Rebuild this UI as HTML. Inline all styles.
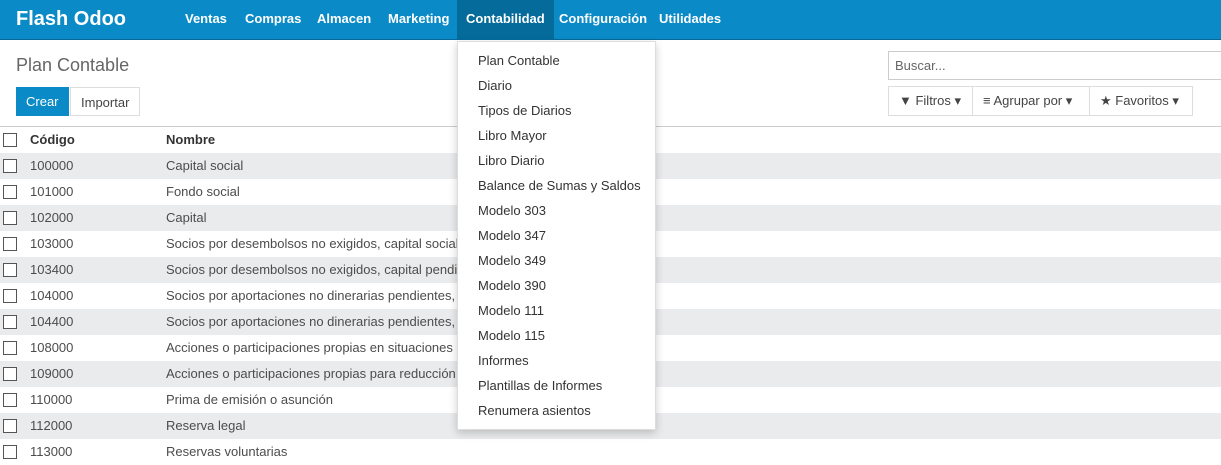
<!DOCTYPE html>
<html><head><meta charset="utf-8"><style>
*{box-sizing:border-box;margin:0;padding:0}
body{width:1221px;height:461px;overflow:hidden;background:#fff;font-family:"Liberation Sans",sans-serif;color:#4c4c4c;font-size:13px;position:relative}
.nav{position:absolute;left:0;top:0;width:1221px;height:40px;background:#0a8bc7;border-bottom:1px solid #07689a}
.brand{position:absolute;left:16px;top:8px;color:#fff;font-size:20px;font-weight:bold}
.nav a{position:absolute;top:0;height:40px;line-height:38px;color:#fff;font-size:13px;font-weight:bold;padding:0 9px}
.act{background:#046b9b}
.title{position:absolute;left:16px;top:55px;font-size:18px;color:#666}
.btn{position:absolute;top:87px;height:29px;line-height:29px;font-size:13px;padding:0 10px}
.crear{left:16px;background:#0a8bc7;color:#fff}
.imp{left:70px;border:1px solid #ddd;color:#444}
.search{position:absolute;left:888px;top:51px;width:340px;height:29px;border:1px solid #ccc;padding:6px;color:#666;font-size:13px}
.fb{position:absolute;top:86px;height:30px;border:1px solid #ddd;line-height:28px;padding:0 10px;color:#444;font-size:13px}
.line{position:absolute;left:0;top:126px;width:1221px;height:1px;background:#ccc}
.row{position:absolute;left:0;width:1221px;height:26px;line-height:26px}
.row.g{background:#eaebed}
.cb{position:absolute;left:3px;top:6px;width:14px;height:14px;border:1px solid #555;background:#fff}
.c1{position:absolute;left:30px}
.c2{position:absolute;left:166px}
.h{font-weight:bold;color:#333}
.dd{position:absolute;left:457px;top:41px;width:199px;height:389px;background:#fff;border:1px solid #ddd;box-shadow:0 3px 8px rgba(0,0,0,.2)}
.dd div{height:25px;line-height:25px;padding-left:20px;color:#333;font-size:13px}
</style></head><body>
<div class="nav"><div class="brand">Flash Odoo</div>
<a style="left:176px">Ventas</a><a style="left:236px">Compras</a><a style="left:308px">Almacen</a><a style="left:379px">Marketing</a><a class="act" style="left:457px;padding:0 9px">Contabilidad</a><a style="left:550px">Configuración</a><a style="left:650px">Utilidades</a></div>
<div class="title">Plan Contable</div>
<div class="btn crear">Crear</div><div class="btn imp">Importar</div>
<div class="search">Buscar...</div>
<div class="fb" style="left:888px;width:85px">▼ Filtros ▾</div>
<div class="fb" style="left:972px;width:118px">≡ Agrupar por ▾</div>
<div class="fb" style="left:1089px;width:104px">★ Favoritos ▾</div>
<div class="line"></div>
<div class="row h" style="top:127px"><span class="cb"></span><span class="c1">Código</span><span class="c2">Nombre</span></div>
<div class="row g" style="top:153px"><span class="cb"></span><span class="c1">100000</span><span class="c2">Capital social</span></div>
<div class="row" style="top:179px"><span class="cb"></span><span class="c1">101000</span><span class="c2">Fondo social</span></div>
<div class="row g" style="top:205px"><span class="cb"></span><span class="c1">102000</span><span class="c2">Capital</span></div>
<div class="row" style="top:231px"><span class="cb"></span><span class="c1">103000</span><span class="c2">Socios por desembolsos no exigidos, capital social</span></div>
<div class="row g" style="top:257px"><span class="cb"></span><span class="c1">103400</span><span class="c2">Socios por desembolsos no exigidos, capital pendiente</span></div>
<div class="row" style="top:283px"><span class="cb"></span><span class="c1">104000</span><span class="c2">Socios por aportaciones no dinerarias pendientes,</span></div>
<div class="row g" style="top:309px"><span class="cb"></span><span class="c1">104400</span><span class="c2">Socios por aportaciones no dinerarias pendientes,</span></div>
<div class="row" style="top:335px"><span class="cb"></span><span class="c1">108000</span><span class="c2">Acciones o participaciones propias en situaciones</span></div>
<div class="row g" style="top:361px"><span class="cb"></span><span class="c1">109000</span><span class="c2">Acciones o participaciones propias para reducción</span></div>
<div class="row" style="top:387px"><span class="cb"></span><span class="c1">110000</span><span class="c2">Prima de emisión o asunción</span></div>
<div class="row g" style="top:413px"><span class="cb"></span><span class="c1">112000</span><span class="c2">Reserva legal</span></div>
<div class="row" style="top:439px"><span class="cb"></span><span class="c1">113000</span><span class="c2">Reservas voluntarias</span></div>
<div class="dd" style="padding-top:6px">
<div>Plan Contable</div><div>Diario</div><div>Tipos de Diarios</div><div>Libro Mayor</div><div>Libro Diario</div><div>Balance de Sumas y Saldos</div><div>Modelo 303</div><div>Modelo 347</div><div>Modelo 349</div><div>Modelo 390</div><div>Modelo 111</div><div>Modelo 115</div><div>Informes</div><div>Plantillas de Informes</div><div>Renumera asientos</div>
</div>
</body></html>
